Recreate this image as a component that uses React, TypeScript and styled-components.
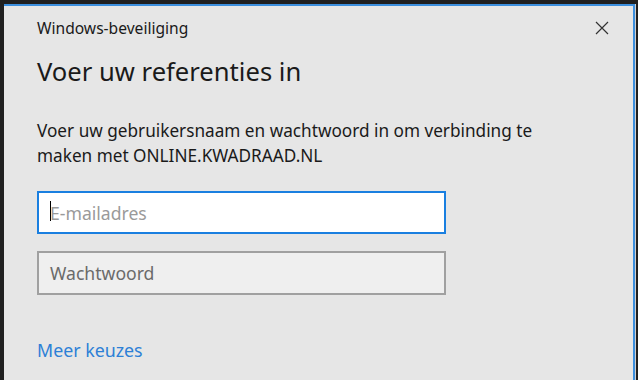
import styled, { createGlobalStyle } from "styled-components";

const GlobalStyle = createGlobalStyle`
  html, body {
    margin: 0;
    padding: 0;
    background: #202020;
    overflow: hidden;
  }
  * {
    box-sizing: border-box;
  }
`;

const Screen = styled.div`
  width: 638px;
  height: 380px;
  padding: 4px 0 0 4px;
  background: #202020;
`;

const Dialog = styled.div`
  width: 631px;
  height: 376px;
  background: #e6e6e6;
  border-top: 2px solid #3c8fde;
  border-right: 2px solid #3c8fde;
  box-shadow: 1px 0 0 #d0d0d0;
  padding: 0 0 0 33px;
  font-family: "Noto Sans", "Open Sans", sans-serif;
  color: #1a1a1a;
`;

const TitleBar = styled.div`
  display: flex;
  align-items: center;
  justify-content: space-between;
  height: 44px;
  padding-right: 21px;
`;

const Caption = styled.span`
  font-size: 15.6px;
`;

const Close = styled.button`
  width: 20px;
  height: 20px;
  padding: 0;
  border: 0;
  background: transparent;
  display: flex;
  align-items: center;
  justify-content: center;
`;

const Heading = styled.h1`
  margin: 6px 0 0 0;
  font-size: 25.6px;
  font-weight: 400;
  line-height: 32px;
`;

const Message = styled.p`
  margin: 30px 0 0 0;
  width: 510px;
  font-size: 17.2px;
  line-height: 25px;
`;

const Field = styled.div<{ focused?: boolean }>`
  position: relative;
  width: 409px;
  height: ${(p) => (p.focused ? 43 : 44)}px;
  margin-top: ${(p) => (p.focused ? 23 : 17)}px;
  border: 2px solid ${(p) => (p.focused ? "#1a7fe0" : "#a0a0a0")};
  background: ${(p) => (p.focused ? "#ffffff" : "#efefef")};
  display: flex;
  align-items: center;
  padding-left: 11px;
  font-size: 17.6px;
  color: ${(p) => (p.focused ? "#9a9a9a" : "#6a6a6a")};
`;

const Caret = styled.span`
  position: absolute;
  left: 11px;
  top: 8px;
  width: 1px;
  height: 20px;
  background: #000;
`;

const Link = styled.a`
  display: inline-block;
  margin-top: 43px;
  font-size: 17.8px;
  color: #2d80d6;
  text-decoration: none;
`;

export default function App() {
  return (
    <>
      <GlobalStyle />
      <Screen>
        <Dialog>
          <TitleBar>
            <Caption>Windows-beveiliging</Caption>
            <Close aria-label="Sluiten">
              <svg width="14" height="14" viewBox="0 0 14 14">
                <path
                  d="M1 1 L13 13 M13 1 L1 13"
                  stroke="#333"
                  strokeWidth="1.2"
                  fill="none"
                />
              </svg>
            </Close>
          </TitleBar>
          <Heading>Voer uw referenties in</Heading>
          <Message>
            Voer uw gebruikersnaam en wachtwoord in om verbinding te maken met
            ONLINE.KWADRAAD.NL
          </Message>
          <Field focused>
            <Caret />
            E-mailadres
          </Field>
          <Field>Wachtwoord</Field>
          <Link href="#">Meer keuzes</Link>
        </Dialog>
      </Screen>
    </>
  );
}
